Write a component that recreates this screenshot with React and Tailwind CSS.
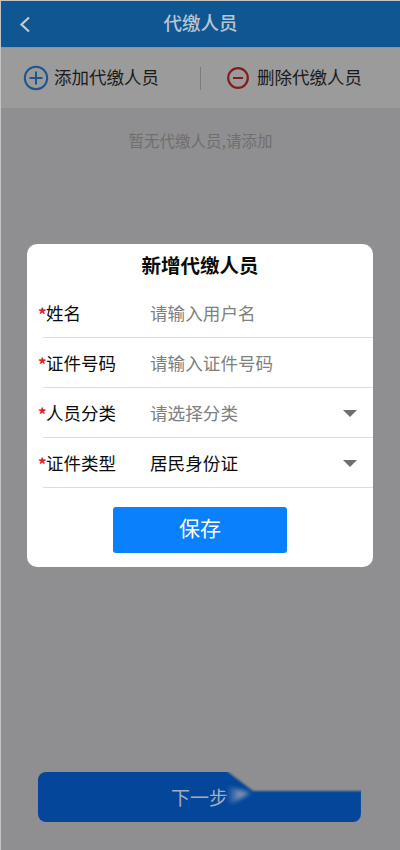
import React from "react";

const cjk = { fontFamily: '"Noto Sans CJK SC", "Noto Sans", sans-serif' };

const rows = [
  { label: "姓名", value: "请输入用户名" },
  { label: "证件号码", value: "请输入证件号码" },
  { label: "人员分类", value: "请选择分类", select: true },
  { label: "证件类型", value: "居民身份证", select: true, filled: true },
];

function FormRow({ label, value, select, filled }) {
  return (
    <div className="ml-[16px] flex h-[50px] items-center border-b border-[#dcdcdc] pt-[2px]">
      <div className="flex w-[107px] items-center text-[17.5px] text-[#0b0b0b]">
        <span className="-ml-[5px] w-[8px] text-[17px] font-bold text-[#d8232a]">*</span>
        <span>{label}</span>
      </div>
      <span className={`flex-1 text-[17.6px] ${filled ? "text-[#0b0b0b]" : "text-[#808080]"}`}>
        {value}
      </span>
      {select && (
        <span className="mr-[16px] h-0 w-0 border-x-[7px] border-t-[7px] border-x-transparent border-t-[#6e6e6e]" />
      )}
    </div>
  );
}

export default function App() {
  return (
    <div
      className="relative flex h-[850px] w-[400px] flex-col overflow-hidden border-l border-t border-[#c4c4c4] bg-[#8f8e90]"
      style={cjk}
    >
      <header className="relative flex h-[47px] shrink-0 items-center justify-center border-b border-[#7f98ad] bg-[#0e5792] pb-[3px]">
        <svg className="absolute left-[17px] top-[14px]" width="14" height="19" viewBox="0 0 14 19" fill="none">
          <path d="M11 2.5 L3.5 9.5 L11 16.5" stroke="#c3ccd6" strokeWidth="2.2" />
        </svg>
        <h1 className="text-[18.5px] font-medium text-[#b9c4cf]">代缴人员</h1>
      </header>

      <div className="flex h-[60px] shrink-0 items-center bg-[#9b9b9b] pl-[22px]">
        <svg width="26" height="26" viewBox="0 0 26 26" fill="none">
          <circle cx="13" cy="13" r="11.2" stroke="#1c568f" strokeWidth="2" />
          <path d="M13 6.5 V19.5 M6.5 13 H19.5" stroke="#1c568f" strokeWidth="2" />
        </svg>
        <span className="mb-[2px] ml-[5px] text-[17.5px] text-[#1a1a1a]">添加代缴人员</span>
        <span className="ml-[41px] h-[23px] w-px bg-[#7b7b7b]" />
        <svg className="ml-[25px]" width="24" height="24" viewBox="0 0 24 24" fill="none">
          <circle cx="12" cy="12" r="9.8" stroke="#851c1c" strokeWidth="2.2" />
          <path d="M7 12 H17" stroke="#851c1c" strokeWidth="2" />
        </svg>
        <span className="mb-[2px] ml-[7px] text-[17.5px] text-[#1a1a1a]">删除代缴人员</span>
      </div>

      <p className="mt-[21px] text-center text-[15.5px] text-[#6f6f6f]">暂无代缴人员,请添加</p>

      <div className="relative mb-[28px] ml-[37px] mt-auto flex h-[50px] w-[323px] items-center justify-center rounded-[8px] bg-[#03469a]">
        <span className="text-[19px] text-[#a3adbd]">下一步</span>
        <svg className="absolute -right-[6px] -top-[3px]" width="142" height="56" viewBox="0 0 142 56">
          <defs>
            <linearGradient id="smear" x1="0" y1="0" x2="1" y2="0">
              <stop offset="0" stopColor="#03469a" />
              <stop offset="0.55" stopColor="#7f96b8" />
              <stop offset="1" stopColor="#5f80ae" />
            </linearGradient>
          </defs>
          <path className="blur-[1px]" d="M3 0 H142 V22 H28 L3 3 Z" fill="#8f8e90" />
          <path className="blur-[1px]" d="M137 22 H142 V50 H137 Z" fill="#8f8e90" />
          <path className="blur-[2px]" d="M2 17 L26 24 L6 35 L2 33 Z" fill="url(#smear)" />
        </svg>
      </div>

      <div className="absolute left-[26px] top-[243px] h-[323px] w-[346px] rounded-[10px] bg-white">
        <h2 className="flex h-[44px] items-center justify-center pb-[3px] text-[19.5px] font-bold text-[#0b0b0b]">
          新增代缴人员
        </h2>
        {rows.map((row) => (
          <FormRow key={row.label} {...row} />
        ))}
        <div className="mx-auto mt-[19px] flex h-[46px] w-[174px] items-center justify-center rounded-[3px] bg-[#0a80fd] pb-[4px] text-[21px] text-white">
          保存
        </div>
      </div>
    </div>
  );
}
